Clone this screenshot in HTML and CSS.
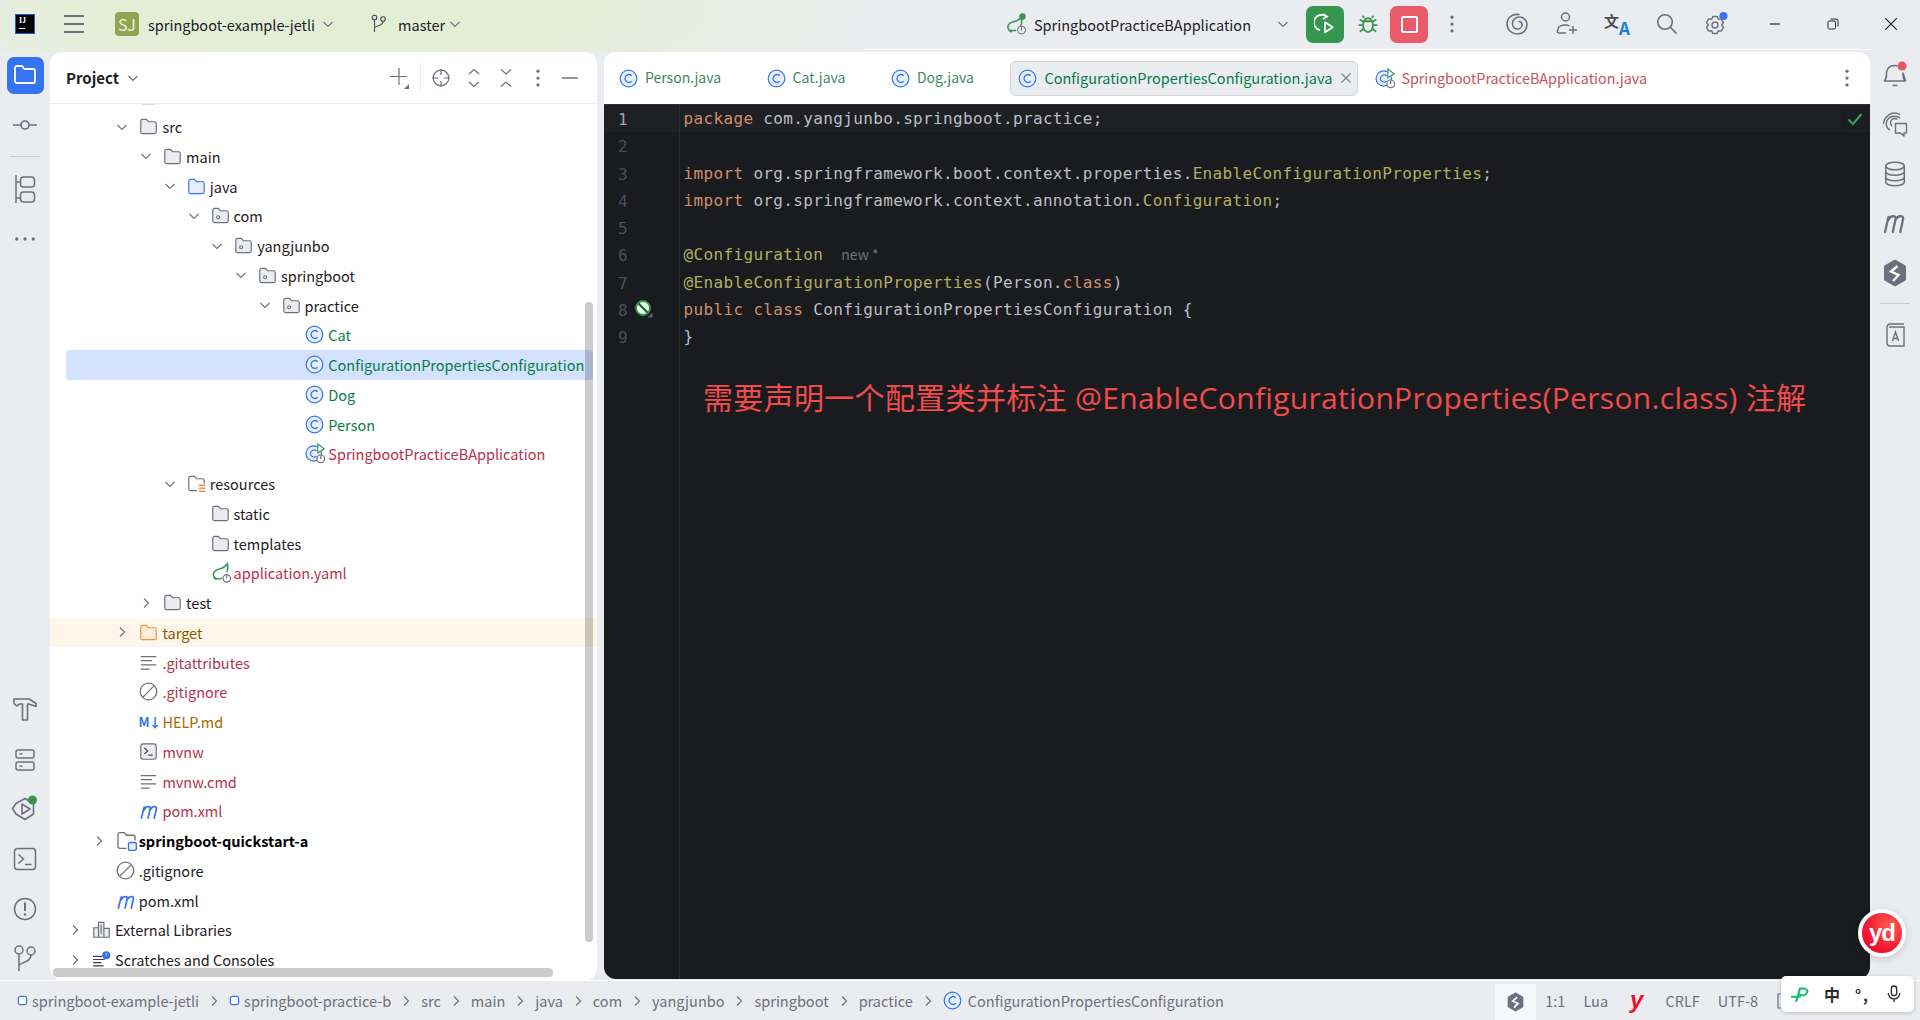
FILE: index.html
```html
<!DOCTYPE html>
<html lang="zh">
<head>
<meta charset="utf-8">
<title>springboot-example-jetli</title>
<link rel="stylesheet" href="styles.css">
</head>
<body>
<svg class="sprite" width="0" height="0" aria-hidden="true">
  <defs>
    <symbol id="folder" viewBox="0 0 16 16"><path d="M1.500 3.500A1.500 1.500 0 0 1 3 2h3.200l1.800 2h5A1.500 1.500 0 0 1 14.500 5.500v7A1.500 1.500 0 0 1 13 14H3a1.500 1.500 0 0 1-1.500-1.500z" fill="#ebecf0" stroke="#6c707e"/></symbol>
    <symbol id="folder-src" viewBox="0 0 16 16"><path d="M1.500 3.500A1.500 1.500 0 0 1 3 2h3.200l1.800 2h5A1.500 1.500 0 0 1 14.500 5.500v7A1.500 1.500 0 0 1 13 14H3a1.500 1.500 0 0 1-1.500-1.500z" fill="#e7effd" stroke="#3574f0"/></symbol>
    <symbol id="folder-out" viewBox="0 0 16 16"><path d="M1.500 3.500A1.500 1.500 0 0 1 3 2h3.200l1.800 2h5A1.500 1.500 0 0 1 14.500 5.500v7A1.500 1.500 0 0 1 13 14H3a1.500 1.500 0 0 1-1.500-1.500z" fill="#ffeedd" stroke="#ec8f4c"/></symbol>
    <symbol id="package" viewBox="0 0 16 16"><path d="M1.500 3.500A1.500 1.500 0 0 1 3 2h3.200l1.800 2h5A1.500 1.500 0 0 1 14.500 5.500v7A1.500 1.500 0 0 1 13 14H3a1.500 1.500 0 0 1-1.500-1.500z" fill="#ebecf0" stroke="#6c707e"/><circle cx="6" cy="9.500" r="1.300" fill="none" stroke="#6c707e" stroke-width=".9"/></symbol>
    <symbol id="folder-res" viewBox="0 0 16 16"><path d="M8.500 14H3a1.500 1.500 0 0 1-1.500-1.500v-9A1.500 1.500 0 0 1 3 2h3.200l1.800 2h5A1.500 1.500 0 0 1 14.500 5.500V8" fill="#fff" stroke="#6c707e"/><path d="M10 9.500h5.500M10 12h5.500M10 14.500h5.500" fill="none" stroke="#ec8f4c" stroke-width="1.400"/></symbol>
    <symbol id="module" viewBox="0 0 16 16"><path d="M8 14H3a1.500 1.500 0 0 1-1.500-1.500v-9A1.500 1.500 0 0 1 3 2h3.200l1.800 2h5A1.500 1.500 0 0 1 14.500 5.500V8" fill="#fff" stroke="#6c707e"/><rect x="9.500" y="9.500" width="6" height="6" rx="1.500" fill="#e7effd" stroke="#3574f0"/></symbol>
    <symbol id="cls" viewBox="0 0 16 16"><circle cx="8" cy="8" r="7" fill="#e7effd" stroke="#3574f0"/><path d="M10.700 5.600A3.400 3.400 0 0 0 5 8a3.400 3.400 0 0 0 5.700 2.400" fill="none" stroke="#3574f0" stroke-width="1.100"/></symbol>
    <symbol id="spring-cls" viewBox="0 0 18 18"><circle cx="7.500" cy="9" r="6.600" fill="#e7effd" stroke="#3574f0"/><path d="M10 6.800A3.200 3.200 0 0 0 4.600 9 3.200 3.200 0 0 0 10 11.200" fill="none" stroke="#3574f0"/><path d="M11 .8l5.500 4.200L11 8.400z" fill="#fff" stroke="#369650"/><circle cx="13.500" cy="13.600" r="3.300" fill="#fff" stroke="#6c707e"/><path d="M13.500 10.800v3" stroke="#6c707e"/></symbol>
    <symbol id="spring" viewBox="0 0 18 18"><path d="M4.500 14.800C1.500 12.500 1 9.500 4 7.300 7 5 11 6.500 14 1.500c.7 3 .4 5.500-.6 7.200" fill="none" stroke="#369650" stroke-width="1.300"/><path d="M2.500 13.500c2 1.300 5 1.200 7 .3" fill="none" stroke="#369650" stroke-width="1.300"/><circle cx="13.500" cy="14" r="3.200" fill="#fff" stroke="#6c707e"/><path d="M13.500 11v3" stroke="#6c707e"/></symbol>
    <symbol id="spring-run" viewBox="0 0 22 22"><path d="M6 19C1.500 17.500 .8 13 3.500 10.500 7 7.500 12 9.500 15 4.500c1 3 1 6-.6 8.500" fill="none" stroke="#369650" stroke-width="1.500"/><path d="M3 17.500h7" stroke="#369650" stroke-width="1.500"/><circle cx="16.500" cy="3.500" r="3.200" fill="#369650"/><circle cx="15.500" cy="17" r="4" fill="#ebecf0" stroke="#6c707e"/><path d="M15.500 13.500v4" stroke="#6c707e"/></symbol>
    <symbol id="text" viewBox="0 0 16 16"><path d="M1.500 3h13M1.500 6.500h9.500M1.500 10h13M1.500 13.500h7.500" fill="none" stroke="#6c707e" stroke-width="1.100"/></symbol>
    <symbol id="ignore" viewBox="0 0 16 16"><circle cx="8" cy="8" r="7" fill="#fff" stroke="#6c707e" stroke-width="1.100"/><path d="M3.500 12.500l9-9" stroke="#6c707e" stroke-width="1.100"/></symbol>
    <symbol id="shell" viewBox="0 0 16 16"><rect x="1.500" y="1.500" width="13" height="13" rx="2" fill="#ebecf0" stroke="#6c707e"/><path d="M4.500 5l2.800 2.500L4.500 10M8 11h3.500" fill="none" stroke="#3d4048"/></symbol>
    <symbol id="mvn" viewBox="0 0 18 18"><path d="M2 15.500L4.500 6M4.400 8.500C5.500 5.500 9.500 4.500 9.700 7L7.800 15.500M9.600 8.500c1.100-3 5.200-4 5.400-1.500L13.100 15.500" fill="none" stroke="#3574f0" stroke-width="1.500" stroke-linecap="round"/></symbol>
    <symbol id="libs" viewBox="0 0 16 16"><path d="M1.500 6.500h4v8h-4zM5.500 2h4.500v12.500H5.500zM10 7h4.500v7.500H10z" fill="#ebecf0" stroke="#6c707e"/><path d="M7.700 4v8" stroke="#6c707e"/></symbol>
    <symbol id="scratch" viewBox="0 0 18 16"><path d="M1 5h9M1 8h11M1 11h8M1 14h10" fill="none" stroke="#3d4048" stroke-width="1.100"/><circle cx="13.500" cy="4" r="3.800" fill="#3574f0"/><path d="M13.500 2v2.300" stroke="#fff"/></symbol>
    <symbol id="chev-d" viewBox="0 0 12 12"><path d="M1.500 4l4.500 4.500L10.500 4" fill="none" stroke="#6c707e" stroke-width="1.100"/></symbol>
    <symbol id="chev-r" viewBox="0 0 12 12"><path d="M4 1.500L8.500 6 4 10.500" fill="none" stroke="#6c707e" stroke-width="1.100"/></symbol>
    <symbol id="kebab" viewBox="0 0 16 16"><circle cx="8" cy="2.500" r="1.300" fill="#6c707e"/><circle cx="8" cy="8" r="1.300" fill="#6c707e"/><circle cx="8" cy="13.500" r="1.300" fill="#6c707e"/></symbol>
    <symbol id="branch" viewBox="0 0 16 20"><circle cx="3.500" cy="3.500" r="2.300" fill="none" stroke="#4a4d55" stroke-width="1.100"/><circle cx="12" cy="5" r="2.300" fill="none" stroke="#4a4d55" stroke-width="1.100"/><path d="M3.500 6v12M3.500 14c0-2.500 8.500-1.500 8.500-6.800" fill="none" stroke="#4a4d55" stroke-width="1.100"/></symbol>
    <symbol id="rerun" viewBox="0 0 20 20"><path d="M11 3A7 7 0 1 0 5.500 15.500" fill="none" stroke="#fff" stroke-width="1.700"/><path d="M8 .8l4 2.400-4 2.400" fill="none" stroke="#fff" stroke-width="1.500"/><path d="M10 8.500l7 4.500-7 4.500z" fill="none" stroke="#fff" stroke-width="1.600" stroke-linejoin="round"/></symbol>
    <symbol id="bug" viewBox="0 0 20 20"><ellipse cx="10" cy="11" rx="4.600" ry="6.300" fill="none" stroke="#369650" stroke-width="1.600"/><path d="M6 7.500h8M6.500 4.500L5 2.500M13.500 4.500l1.500-2M5.500 11H1.500M14.500 11h4M6 14.500l-3.500 2.500M14 14.500l3.500 2.500M6 8L2.500 6M14 8l3.500-2" fill="none" stroke="#369650" stroke-width="1.600"/></symbol>
    <symbol id="swirl" viewBox="0 0 22 22"><path d="M13 1.500C6 .5 1 5 1 11c0 6 5 10 10.500 10C17 21 21 17 21 11.500 21 7 17.500 4 13.500 4 9.500 4 6.500 7 6.500 10.500c0 3.500 2.500 5.500 5 5.500s4.500-2 4.500-4.300c0-2-1.500-3.200-3-3.200" fill="none" stroke="#6c707e" stroke-width="1.600" stroke-linecap="round"/></symbol>
    <symbol id="adduser" viewBox="0 0 22 24"><circle cx="9.500" cy="5" r="4" fill="none" stroke="#6c707e" stroke-width="1.500"/><path d="M1.500 21c0-3.500 0-8 8-8 2 0 3 .3 4 1M2 21h8M17 14v8M13 18h8" fill="none" stroke="#6c707e" stroke-width="1.500"/></symbol>
    <symbol id="search" viewBox="0 0 22 22"><circle cx="9" cy="9" r="7.300" fill="none" stroke="#6c707e" stroke-width="1.600"/><path d="M14.300 14.300l6.300 6.300" stroke="#6c707e" stroke-width="1.600"/></symbol>
    <symbol id="gear" viewBox="0 0 24 24"><g transform="translate(0 3)"><path d="M7.870 1.460h4.260L13.300 4.280 16.330 3.880 18.460 7.570 16.600 10l1.860 2.430-2.130 3.690-3.030-.4-1.170 2.820H7.870L6.700 15.720l-3.030.4-2.130-3.690L3.400 10 1.540 7.570l2.130-3.690 3.030.4z" fill="none" stroke="#6c707e" stroke-width="1.400" stroke-linejoin="round"/><circle cx="10" cy="10" r="3" fill="none" stroke="#6c707e" stroke-width="1.400"/></g><circle cx="18.500" cy="4" r="4" fill="#3574f0"/></symbol>
    <symbol id="project" viewBox="0 0 24 24"><path d="M2 5a2 2 0 0 1 2-2h5l2.500 3H20a2 2 0 0 1 2 2v10a2 2 0 0 1-2 2H4a2 2 0 0 1-2-2z" fill="none" stroke="#fff" stroke-width="1.800"/></symbol>
    <symbol id="commit" viewBox="0 0 26 26"><circle cx="13" cy="13" r="4" fill="none" stroke="#6c707e" stroke-width="1.600"/><path d="M1 13h8M17 13h8" stroke="#6c707e" stroke-width="1.600"/></symbol>
    <symbol id="structure" viewBox="0 0 24 30"><path d="M3 1v28M3 8h4M3 24h4" fill="none" stroke="#6c707e" stroke-width="1.500"/><rect x="7.500" y="3" width="14" height="10" rx="3" fill="none" stroke="#6c707e" stroke-width="1.500"/><rect x="7.500" y="18" width="14" height="10" rx="3" fill="none" stroke="#6c707e" stroke-width="1.500"/></symbol>
    <symbol id="dots" viewBox="0 0 24 6"><circle cx="3" cy="3" r="1.800" fill="#6c707e"/><circle cx="12" cy="3" r="1.800" fill="#6c707e"/><circle cx="21" cy="3" r="1.800" fill="#6c707e"/></symbol>
    <symbol id="hammer" viewBox="0 0 26 26"><path d="M2 2h15l7 4.500v3L17 7h-1.500v16h-5V7H7.500L4.500 9 2 6.500z" fill="none" stroke="#6c707e" stroke-width="1.600" stroke-linejoin="round"/></symbol>
    <symbol id="services" viewBox="0 0 24 26"><rect x="3" y="3" width="18" height="8" rx="2" fill="none" stroke="#6c707e" stroke-width="1.500"/><rect x="3" y="15" width="18" height="8" rx="2" fill="none" stroke="#6c707e" stroke-width="1.500"/><path d="M6.500 7h3M6.500 19h3" stroke="#6c707e" stroke-width="1.500"/></symbol>
    <symbol id="run-tool" viewBox="0 0 28 28"><path d="M14 3.500L22.500 8.500V19L14 24.500 5 19 1.500 13.500 5 8.500z" fill="none" stroke="#6c707e" stroke-width="1.600" stroke-linejoin="round"/><path d="M11 9l8 5-8 5z" fill="none" stroke="#6c707e" stroke-width="1.600" stroke-linejoin="round"/><circle cx="21.500" cy="5" r="4.500" fill="#369650"/></symbol>
    <symbol id="terminal" viewBox="0 0 24 24"><rect x="1.500" y="1.500" width="21" height="21" rx="3" fill="none" stroke="#6c707e" stroke-width="1.500"/><path d="M5.500 7.500l5 4.500-5 4.500M12 17.500h6.500" fill="none" stroke="#6c707e" stroke-width="1.500"/></symbol>
    <symbol id="problems" viewBox="0 0 24 24"><circle cx="12" cy="12" r="10.500" fill="none" stroke="#6c707e" stroke-width="1.500"/><path d="M12 5.500v8.500" stroke="#6c707e" stroke-width="2"/><circle cx="12" cy="17.500" r="1.300" fill="#6c707e"/></symbol>
    <symbol id="vcs" viewBox="0 0 24 28"><circle cx="6" cy="6" r="4" fill="none" stroke="#6c707e" stroke-width="1.500"/><circle cx="18" cy="7" r="4" fill="none" stroke="#6c707e" stroke-width="1.500"/><path d="M6 10v17M6 22c0-4 12-3 12-11" fill="none" stroke="#6c707e" stroke-width="1.500"/></symbol>
    <symbol id="bell" viewBox="0 0 26 28"><path d="M2 20c2.500-2 2.500-4 2.500-8 0-5 4-7.500 8-7.500 1 0 2 .2 3 .5M21 12c0 4 0 6 2.500 8zM2 20h21.500M10.500 24.500h5" fill="none" stroke="#6c707e" stroke-width="1.500" stroke-linejoin="round"/><circle cx="20" cy="5" r="4.500" fill="#e55765"/></symbol>
    <symbol id="aichat" viewBox="0 0 26 26"><path d="M1.500 13C2 6.500 9-1 18 3.500M8 19C4 17 3 12 6 8c3-3.500 9-3.500 12-1M10 15c-2-2-2-5 0-6.500 1.500-1 4-1 5.500 0" fill="none" stroke="#6c707e" stroke-width="1.400"/><path d="M13.500 12.500h11v9.500H22v3l-3.500-3h-5z" fill="#ebecf0" stroke="#6c707e" stroke-width="1.400" stroke-linejoin="round"/></symbol>
    <symbol id="database" viewBox="0 0 22 26"><ellipse cx="11" cy="5" rx="9.300" ry="3.800" fill="none" stroke="#6c707e" stroke-width="1.500"/><path d="M1.700 5v16c0 2.200 4.200 3.800 9.300 3.800s9.300-1.600 9.300-3.800V5M1.700 10.500c0 2.200 4.200 3.800 9.300 3.800s9.300-1.600 9.300-3.800M1.700 16c0 2.200 4.200 3.800 9.300 3.800s9.300-1.600 9.300-3.800" fill="none" stroke="#6c707e" stroke-width="1.500"/></symbol>
    <symbol id="m-gray" viewBox="0 0 24 22"><path d="M2 20L5.500 5M5.300 8C7 3.500 12 3 12.700 6.500L9.800 20M12.500 8c1.700-4.500 7-5 7.700-1.500L17.300 20" fill="none" stroke="#6c707e" stroke-width="2.300" stroke-linecap="round"/></symbol>
    <symbol id="hex" viewBox="0 0 24 28"><path d="M12 1l10.500 6v14L12 27 1.500 21V7z" fill="#6c707e" stroke="#6c707e" stroke-linejoin="round"/><path d="M14.500 7L8 12.500l7.500 3.500L10 22" fill="none" stroke="#fff" stroke-width="2.400"/></symbol>
    <symbol id="book" viewBox="0 0 22 26"><path d="M3 21V5.500C3 3.500 4.500 2 6.500 2H20M5 5h15v19H6c-2 0-3-1.300-3-3" fill="none" stroke="#6c707e" stroke-width="1.400"/><path d="M8.500 19l3-9 3 9M9.500 16.500h4" fill="none" stroke="#6c707e" stroke-width="1.400"/></symbol>
    <symbol id="locate" viewBox="0 0 20 20"><circle cx="10" cy="10" r="7.800" fill="none" stroke="#6c707e" stroke-width="1.200"/><path d="M10 1v6M10 13v6M1 10h6M13 10h6" stroke="#6c707e" stroke-width="1.200"/></symbol>
    <symbol id="expand" viewBox="0 0 14 20"><path d="M2 6l5-4.500L12 6M2 14l5 4.500 5-4.500" fill="none" stroke="#6c707e" stroke-width="1.200"/></symbol>
    <symbol id="collapse" viewBox="0 0 14 20"><path d="M2 1.500L7 6l5-4.500M2 18.500L7 14l5 4.500" fill="none" stroke="#6c707e" stroke-width="1.200"/></symbol>
    <symbol id="plus" viewBox="0 0 20 24"><path d="M9 2v17M0 10.500h17" stroke="#6c707e" stroke-width="1.200"/><path d="M19 18v5h-5z" fill="#6c707e"/></symbol>
    <symbol id="minus" viewBox="0 0 16 4"><path d="M0 2h16" stroke="#6c707e" stroke-width="1.300"/></symbol>
    <symbol id="close" viewBox="0 0 12 12"><path d="M1.500 1.500l9 9M10.500 1.500l-9 9" stroke="#81848d" stroke-width="1.100"/></symbol>
    <symbol id="win-min" viewBox="0 0 12 12"><path d="M1 6h10" stroke="#1f2024" stroke-width="1.200"/></symbol>
    <symbol id="win-max" viewBox="0 0 12 12"><rect x="1" y="3" width="7.500" height="8" rx="1.500" fill="none" stroke="#1f2024" stroke-width="1"/><path d="M3.500 1h5.500a2 2 0 0 1 2 2v5.500" fill="none" stroke="#1f2024" stroke-width="1"/></symbol>
    <symbol id="win-close" viewBox="0 0 12 12"><path d="M1 1l10 10M11 1L1 11" stroke="#1f2024" stroke-width="1"/></symbol>
    <symbol id="nav-mod" viewBox="0 0 12 12"><rect x="1.500" y="1.500" width="9" height="9" rx="2" fill="#fff" stroke="#3574f0" stroke-width="1.300"/></symbol>
    <symbol id="run-marker" viewBox="0 0 18 18"><circle cx="8" cy="8" r="7" fill="#eafbe9" stroke="#369650" stroke-width="1.800"/><path d="M3.500 3.500l9 9" stroke="#1f5d30" stroke-width="2.200"/><path d="M17.500 12.500v5h-5z" fill="#5a5d66"/></symbol>
    <symbol id="check" viewBox="0 0 16 14"><path d="M1.500 7.500L6 12 14.500 2" fill="none" stroke="#499c54" stroke-width="2"/></symbol>
    <symbol id="mic" viewBox="0 0 18 20"><rect x="6" y="1" width="6" height="11" rx="3" fill="none" stroke="#2b2d30" stroke-width="1.500"/><path d="M2.500 9a6.500 6.500 0 0 0 13 0M9 16v3" fill="none" stroke="#2b2d30" stroke-width="1.500"/></symbol>
    <symbol id="pin" viewBox="0 0 24 20"><path d="M1 13h11M7 19L12 2h4c5 0 7 3 5 6s-6 4-9 2" fill="none" stroke="#17b978" stroke-width="2.800" stroke-linecap="round"/></symbol>
    <symbol id="bracket" viewBox="0 0 8 16"><path d="M7 1H2v14h5" fill="none" stroke="#6c707e" stroke-width="1.200"/></symbol>
  </defs>
</svg>

<header class="titlebar">
  <div class="ij-logo"><span class="ij-name">IJ</span><span class="ij-bar"></span></div>
  <div class="hamburger"><span></span><span></span><span></span></div>
  <div class="badge">SJ</div>
  <span class="tb-label project-name">springboot-example-jetli</span>
  <svg class="ic12 after-project"><use href="#chev-d"/></svg>
  <svg class="ic-branch"><use href="#branch"/></svg>
  <span class="tb-label">master</span>
  <svg class="ic12 after-branch"><use href="#chev-d"/></svg>
  <div class="tb-right">
    <svg class="ic-springrun"><use href="#spring-run"/></svg>
    <span class="tb-label run-name">SpringbootPracticeBApplication</span>
    <svg class="ic12 run-chev"><use href="#chev-d"/></svg>
    <div class="action run"><svg class="ic22"><use href="#rerun"/></svg></div>
    <div class="slot-bug"><svg class="ic22"><use href="#bug"/></svg></div>
    <div class="action stop"><span class="stop-sq"></span></div>
    <div class="slot-kebab"><svg class="ic20"><use href="#kebab"/></svg></div>
    <div class="slot50"><svg class="ic22"><use href="#swirl"/></svg></div>
    <div class="slot50"><svg class="ic-user"><use href="#adduser"/></svg></div>
    <div class="slot50 translate"><span class="tr-zh">文</span><span class="tr-a">A</span></div>
    <div class="slot50"><svg class="ic22"><use href="#search"/></svg></div>
    <div class="slot50"><svg class="ic-gear"><use href="#gear"/></svg></div>
    <div class="winbtn first"><svg class="ic12"><use href="#win-min"/></svg></div>
    <div class="winbtn"><svg class="ic12"><use href="#win-max"/></svg></div>
    <div class="winbtn"><svg class="ic14"><use href="#win-close"/></svg></div>
  </div>
  <span class="tb-line"></span>
</header>

<main class="workspace">
  <nav class="stripe left">
    <div class="stripe-group">
      <div class="stripe-slot"><div class="project-btn"><svg class="ic24"><use href="#project"/></svg></div></div>
      <div class="stripe-slot"><svg class="ic26"><use href="#commit"/></svg></div>
      <div class="stripe-sep"></div>
      <div class="stripe-slot"><svg class="ic-struct"><use href="#structure"/></svg></div>
      <div class="stripe-slot"><svg class="ic-dots"><use href="#dots"/></svg></div>
    </div>
    <div class="stripe-group bottom">
      <div class="stripe-slot"><svg class="ic26"><use href="#hammer"/></svg></div>
      <div class="stripe-slot"><svg class="ic26"><use href="#services"/></svg></div>
      <div class="stripe-slot"><svg class="ic28"><use href="#run-tool"/></svg></div>
      <div class="stripe-slot"><svg class="ic24"><use href="#terminal"/></svg></div>
      <div class="stripe-slot"><svg class="ic24"><use href="#problems"/></svg></div>
      <div class="stripe-slot"><svg class="ic-vcs"><use href="#vcs"/></svg></div>
    </div>
  </nav>

  <section class="project-panel">
    <div class="panel-head">
      <strong class="panel-title">Project</strong>
      <svg class="ic12 title-chev"><use href="#chev-d"/></svg>
      <div class="head-tools">
        <svg class="ic-plus"><use href="#plus"/></svg>
        <span class="head-sep"></span>
        <svg class="ic20"><use href="#locate"/></svg>
        <svg class="ic-exp"><use href="#expand"/></svg>
        <svg class="ic-exp"><use href="#collapse"/></svg>
        <svg class="ic20"><use href="#kebab"/></svg>
        <svg class="ic-min"><use href="#minus"/></svg>
      </div>
    </div>
    <div class="tree">
      <div class="row first" style="--d:2"><span class="tw"></span><svg class="ti"><use href="#folder"/></svg></div>
      <div class="row" style="--d:2"><svg class="tw"><use href="#chev-d"/></svg><svg class="ti"><use href="#folder"/></svg><span>src</span></div>
      <div class="row" style="--d:3"><svg class="tw"><use href="#chev-d"/></svg><svg class="ti"><use href="#folder"/></svg><span>main</span></div>
      <div class="row" style="--d:4"><svg class="tw"><use href="#chev-d"/></svg><svg class="ti"><use href="#folder-src"/></svg><span>java</span></div>
      <div class="row" style="--d:5"><svg class="tw"><use href="#chev-d"/></svg><svg class="ti"><use href="#package"/></svg><span>com</span></div>
      <div class="row" style="--d:6"><svg class="tw"><use href="#chev-d"/></svg><svg class="ti"><use href="#package"/></svg><span>yangjunbo</span></div>
      <div class="row" style="--d:7"><svg class="tw"><use href="#chev-d"/></svg><svg class="ti"><use href="#package"/></svg><span>springboot</span></div>
      <div class="row" style="--d:8"><svg class="tw"><use href="#chev-d"/></svg><svg class="ti"><use href="#package"/></svg><span>practice</span></div>
      <div class="row green" style="--d:9"><span class="tw"></span><svg class="ti"><use href="#cls"/></svg><span>Cat</span></div>
      <div class="row green sel" style="--d:9"><span class="tw"></span><svg class="ti"><use href="#cls"/></svg><span>ConfigurationPropertiesConfiguration</span></div>
      <div class="row green" style="--d:9"><span class="tw"></span><svg class="ti"><use href="#cls"/></svg><span>Dog</span></div>
      <div class="row green" style="--d:9"><span class="tw"></span><svg class="ti"><use href="#cls"/></svg><span>Person</span></div>
      <div class="row red" style="--d:9"><span class="tw"></span><svg class="ti wide"><use href="#spring-cls"/></svg><span>SpringbootPracticeBApplication</span></div>
      <div class="row" style="--d:4"><svg class="tw"><use href="#chev-d"/></svg><svg class="ti"><use href="#folder-res"/></svg><span>resources</span></div>
      <div class="row" style="--d:5"><span class="tw"></span><svg class="ti"><use href="#folder"/></svg><span>static</span></div>
      <div class="row" style="--d:5"><span class="tw"></span><svg class="ti"><use href="#folder"/></svg><span>templates</span></div>
      <div class="row red" style="--d:5"><span class="tw"></span><svg class="ti wide"><use href="#spring"/></svg><span>application.yaml</span></div>
      <div class="row" style="--d:3"><svg class="tw"><use href="#chev-r"/></svg><svg class="ti"><use href="#folder"/></svg><span>test</span></div>
      <div class="row excluded" style="--d:2"><svg class="tw"><use href="#chev-r"/></svg><svg class="ti"><use href="#folder-out"/></svg><span>target</span></div>
      <div class="row red" style="--d:2"><span class="tw"></span><svg class="ti"><use href="#text"/></svg><span>.gitattributes</span></div>
      <div class="row red" style="--d:2"><span class="tw"></span><svg class="ti"><use href="#ignore"/></svg><span>.gitignore</span></div>
      <div class="row amber" style="--d:2"><span class="tw"></span><span class="ti md">M↓</span><span>HELP.md</span></div>
      <div class="row red" style="--d:2"><span class="tw"></span><svg class="ti"><use href="#shell"/></svg><span>mvnw</span></div>
      <div class="row red" style="--d:2"><span class="tw"></span><svg class="ti"><use href="#text"/></svg><span>mvnw.cmd</span></div>
      <div class="row red" style="--d:2"><span class="tw"></span><svg class="ti wide"><use href="#mvn"/></svg><span>pom.xml</span></div>
      <div class="row bold" style="--d:1"><svg class="tw"><use href="#chev-r"/></svg><svg class="ti wide"><use href="#module"/></svg><span>springboot-quickstart-a</span></div>
      <div class="row" style="--d:1"><span class="tw"></span><svg class="ti"><use href="#ignore"/></svg><span>.gitignore</span></div>
      <div class="row" style="--d:1"><span class="tw"></span><svg class="ti wide"><use href="#mvn"/></svg><span>pom.xml</span></div>
      <div class="row" style="--d:0"><svg class="tw"><use href="#chev-r"/></svg><svg class="ti"><use href="#libs"/></svg><span>External Libraries</span></div>
      <div class="row" style="--d:0"><svg class="tw"><use href="#chev-r"/></svg><svg class="ti"><use href="#scratch"/></svg><span>Scratches and Consoles</span></div>
    </div>
    <span class="scroll-v"></span>
    <span class="scroll-h"></span>
  </section>

  <section class="editor-panel">
    <div class="tabs">
      <div class="tab green-tab"><svg class="ti"><use href="#cls"/></svg><span>Person.java</span></div>
      <div class="tab green-tab"><svg class="ti"><use href="#cls"/></svg><span>Cat.java</span></div>
      <div class="tab green-tab"><svg class="ti"><use href="#cls"/></svg><span>Dog.java</span></div>
      <div class="tab active"><svg class="ti"><use href="#cls"/></svg><span>ConfigurationPropertiesConfiguration.java</span><svg class="tab-x"><use href="#close"/></svg></div>
      <div class="tab red-tab"><svg class="ti wide"><use href="#spring-cls"/></svg><span>SpringbootPracticeBApplication.java</span></div>
      <svg class="ic20 tabs-menu"><use href="#kebab"/></svg>
    </div>
    <div class="code-area">
      <div class="gutter">
        <div class="ln cur">1</div>
        <div class="ln">2</div>
        <div class="ln">3</div>
        <div class="ln">4</div>
        <div class="ln">5</div>
        <div class="ln">6</div>
        <div class="ln">7</div>
        <div class="ln">8<svg class="marker"><use href="#run-marker"/></svg></div>
        <div class="ln">9</div>
      </div>
      <div class="code">
        <div class="cl cur"><span class="kw">package</span> com.yangjunbo.springboot.practice;</div>
        <div class="cl"></div>
        <div class="cl"><span class="kw">import</span> org.springframework.boot.context.properties.<span class="an">EnableConfigurationProperties</span>;</div>
        <div class="cl"><span class="kw">import</span> org.springframework.context.annotation.<span class="an">Configuration</span>;</div>
        <div class="cl"></div>
        <div class="cl"><span class="an">@Configuration</span><span class="hint">new *</span></div>
        <div class="cl"><span class="an">@EnableConfigurationProperties</span>(Person.<span class="kw">class</span>)</div>
        <div class="cl"><span class="kw">public class</span> ConfigurationPropertiesConfiguration {</div>
        <div class="cl">}</div>
        <p class="note">需要声明一个配置类并标注 @EnableConfigurationProperties(Person.class) 注解</p>
        <div class="inspect"><svg class="ic-check"><use href="#check"/></svg></div>
      </div>
    </div>
  </section>

  <nav class="stripe right">
    <div class="stripe-slot"><svg class="ic-bell"><use href="#bell"/></svg></div>
    <div class="stripe-slot"><svg class="ic26"><use href="#aichat"/></svg></div>
    <div class="stripe-slot"><svg class="ic-db"><use href="#database"/></svg></div>
    <div class="stripe-slot"><svg class="ic-m"><use href="#m-gray"/></svg></div>
    <div class="stripe-slot"><svg class="ic-hex"><use href="#hex"/></svg></div>
    <div class="stripe-sep narrow"></div>
    <div class="stripe-slot book-slot"><svg class="ic-db"><use href="#book"/></svg></div>
  </nav>
</main>

<footer class="statusbar">
  <div class="crumbs">
    <svg class="ic12"><use href="#nav-mod"/></svg><span>springboot-example-jetli</span><svg class="ic-sep"><use href="#chev-r"/></svg>
    <svg class="ic12"><use href="#nav-mod"/></svg><span>springboot-practice-b</span><svg class="ic-sep"><use href="#chev-r"/></svg>
    <span>src</span><svg class="ic-sep"><use href="#chev-r"/></svg>
    <span>main</span><svg class="ic-sep"><use href="#chev-r"/></svg>
    <span>java</span><svg class="ic-sep"><use href="#chev-r"/></svg>
    <span>com</span><svg class="ic-sep"><use href="#chev-r"/></svg>
    <span>yangjunbo</span><svg class="ic-sep"><use href="#chev-r"/></svg>
    <span>springboot</span><svg class="ic-sep"><use href="#chev-r"/></svg>
    <span>practice</span><svg class="ic-sep"><use href="#chev-r"/></svg>
    <svg class="ti"><use href="#cls"/></svg><span>ConfigurationPropertiesConfiguration</span>
  </div>
  <div class="status-right">
    <div class="plugin-box"><svg class="ic-hex-s"><use href="#hex"/></svg></div>
    <span class="si">1:1</span>
    <span class="si">Lua</span>
    <span class="si y-logo">y</span>
    <span class="si">CRLF</span>
    <span class="si">UTF-8</span>
    <svg class="ic-bracket"><use href="#bracket"/></svg>
  </div>
</footer>

<div class="yd-badge"><span>yd</span></div>
<div class="ime">
  <svg class="ic-pin"><use href="#pin"/></svg>
  <span class="ime-zh">中</span>
  <span class="ime-punct">°,</span>
  <svg class="ic-mic"><use href="#mic"/></svg>
</div>
</body>
</html>
```

FILE: styles.css
```css
* { box-sizing: border-box; }
html, body { margin: 0; height: 100%; }
body {
  width: 1920px;
  height: 1020px;
  overflow: hidden;
  display: flex;
  flex-direction: column;
  position: relative;
  background: #ebecf0;
  color: #1f2024;
  font-family: "Noto Sans CJK SC", "Noto Sans", sans-serif;
  font-size: 14.5px;
}
.sprite { position: absolute; }
svg { flex: none; display: block; overflow: visible; }

.ic12 { width: 12px; height: 12px; }
.ic14 { width: 14px; height: 14px; }
.ic20 { width: 20px; height: 20px; }
.ic22 { width: 22px; height: 22px; }
.ic24 { width: 24px; height: 24px; }
.ic26 { width: 26px; height: 26px; }
.ic28 { width: 28px; height: 28px; }

/* title bar */
.titlebar {
  height: 52px;
  flex: none;
  display: flex;
  align-items: center;
  position: relative;
  padding-left: 15px;
  padding-bottom: 4px;
  background:
    radial-gradient(ellipse 560px 130px at 340px 10px, #e2eed5 0%, #e4eed8 45%, rgba(235,236,240,0) 100%),
    #ebecf0;
}
.ij-logo {
  width: 20px;
  height: 20px;
  background: #000;
  border: 1px solid #1f5fd0;
  display: flex;
  flex-direction: column;
  padding: 0 0 0 3px;
  color: #fff;
}
.ij-name { font: 700 8px/11px "Liberation Serif", serif; }
.ij-bar { width: 6px; height: 1px; background: #fff; margin-top: 2px; }
.hamburger {
  width: 20px;
  margin-left: 29px;
  display: flex;
  flex-direction: column;
  gap: 6px;
}
.hamburger span { height: 2px; background: #6c707e; }
.badge {
  width: 24px;
  height: 24px;
  margin-left: 31px;
  border-radius: 4px;
  background: #8fa650;
  color: #eef3e0;
  font-size: 16px;
  line-height: 24px;
  text-align: center;
}
.tb-label { white-space: nowrap; }
.project-name { margin-left: 9px; }
.after-project { margin-left: 7px; }
.ic-branch { width: 16px; height: 20px; margin-left: 37px; margin-right: 11px; }
.after-branch { margin-left: 4px; }
.tb-right { margin-left: auto; display: flex; align-items: center; }
.ic-springrun { width: 22px; height: 22px; margin-right: 6px; }
.run-chev { margin-left: 26px; margin-right: 16px; }
.action {
  width: 38px;
  height: 37px;
  border-radius: 7px;
  display: flex;
  align-items: center;
  justify-content: center;
}
.run { background: #369650; margin-left: 1px; }
.stop { background: #ea5a68; margin-right: 12px; }
.stop-sq { width: 17px; height: 17px; border: 2px solid #fff; border-radius: 2px; }
.slot-bug { width: 47px; display: flex; justify-content: center; margin-right: -1px; }
.slot-kebab { width: 24px; display: flex; justify-content: center; margin-right: 28px; }
.slot50 { width: 50px; display: flex; justify-content: center; align-items: center; }
.ic-user { width: 22px; height: 24px; }
.ic-gear { width: 24px; height: 24px; }
.translate { font-weight: 700; line-height: 1; }
.tr-zh { font-size: 15px; color: #4a4d55; margin-top: -7px; }
.tr-a { font-size: 17px; color: #1a7fe0; margin-top: 7px; }
.winbtn { width: 58px; display: flex; justify-content: center; }
.winbtn.first { margin-left: 4px; }
.tb-line {
  position: absolute;
  left: 865px;
  width: 1005px;
  top: 49px;
  height: 1px;
  background: #fff;
}

/* workspace */
.workspace { flex: 1; display: flex; min-height: 0; }
.stripe {
  width: 50px;
  flex: none;
  display: flex;
  flex-direction: column;
  align-items: center;
}
.stripe.left { justify-content: space-between; }
.stripe.right { margin-top: -2px; }
.stripe-group { display: flex; flex-direction: column; align-items: center; }
.stripe-group:first-child { margin-top: -2px; }
.stripe-group.bottom { margin-bottom: -3px; }
.stripe-group.bottom .stripe-slot { height: 49.6px; }
.stripe-slot { width: 50px; height: 50px; display: flex; align-items: center; justify-content: center; }
.stripe.right .stripe-slot { height: 49.5px; }
.project-btn {
  width: 37px;
  height: 37px;
  border-radius: 7px;
  background: #3574f0;
  display: flex;
  align-items: center;
  justify-content: center;
}
.stripe-sep { width: 30px; height: 1px; background: #c9ccd6; margin: 6px 0 7px; }
.stripe-sep.narrow { margin: 5px 0 7px; }
.ic-struct { width: 24px; height: 30px; }
.ic-dots { width: 22px; height: 6px; }
.ic-vcs { width: 24px; height: 28px; }
.ic-bell { width: 26px; height: 28px; }
.ic-db { width: 22px; height: 26px; }
.ic-m { width: 24px; height: 22px; }
.ic-hex { width: 24px; height: 28px; }

/* project panel */
.project-panel {
  width: 547px;
  flex: none;
  background: #fff;
  border-radius: 12px;
  position: relative;
  overflow: hidden;
  display: flex;
  flex-direction: column;
}
.panel-head {
  height: 52px;
  flex: none;
  display: flex;
  align-items: center;
  padding-left: 16px;
  border-bottom: 1px solid #ebecf0;
}
.panel-title { font-size: 15px; color: #1f2024; }
.title-chev { margin-left: 8px; }
.head-tools { margin-left: auto; display: flex; align-items: center; padding-right: 19px; }
.ic-plus { width: 20px; height: 24px; }
.head-sep { width: 1px; height: 29px; background: #ebecf0; margin: 0 10px 0 10px; }
.ic-exp { width: 14px; height: 20px; margin-left: 19px; }
.head-tools .ic-exp + .ic-exp { margin-left: 18px; }
.head-tools .ic-exp + .ic-exp + .ic20 { margin-left: 15px; }
.head-tools .ic20 + .ic-exp { margin-left: 16px; }
.ic-min { width: 16px; height: 4px; margin-left: 14px; }
.tree { flex: 1; overflow: hidden; min-height: 0; }
.row {
  --base: 17px;
  height: 29.75px;
  display: flex;
  align-items: center;
  white-space: nowrap;
  padding-left: calc(var(--base) + var(--d) * 23.7px);
}
.row.first { margin-top: -22px; }
.tw { width: 16px; height: 12px; flex: none; padding: 0 2px; }
.ti { width: 19px; height: 19px; margin-left: 9px; margin-right: 4px; flex: none; }
.ti.wide { width: 21px; height: 21px; margin-right: 2px; }
.row.sel {
  margin: 0 4px 0 16px;
  padding-left: calc(var(--base) - 16px + var(--d) * 23.7px);
  background: #d4e2ff;
  border-radius: 4px;
}
.row.excluded { background: #fef6e8; color: #8a5a00; }
.row.green { color: #067d46; }
.row.red { color: #b8314e; }
.row.amber { color: #a86a00; }
.row.bold { font-weight: 700; color: #000; }
.md { color: #3574f0; font-weight: 700; font-size: 13px; line-height: 19px; letter-spacing: -1px; margin-left: 8px; margin-right: 5px; }
.scroll-v {
  position: absolute;
  left: 535px;
  top: 250px;
  width: 8px;
  height: 640px;
  border-radius: 4px;
  background: rgba(0,0,0,.2);
}
.scroll-h {
  position: absolute;
  left: 3px;
  top: 916px;
  width: 500px;
  height: 9px;
  border-radius: 4px;
  background: #cbcbcb;
}

/* editor */
.editor-panel {
  width: 1266px;
  margin-left: 7px;
  flex: none;
  display: flex;
  flex-direction: column;
  border-radius: 12px;
  overflow: hidden;
  height: 927px;
}
.tabs {
  height: 52px;
  flex: none;
  background: #fff;
  display: flex;
  align-items: center;
  padding-left: 6px;
}
.tab {
  height: 35px;
  display: flex;
  align-items: center;
  padding: 0 10px 0 8px;
  margin-right: 25.5px;
  white-space: nowrap;
  border: 1px solid transparent;
  border-radius: 6px;
}
.tab span { margin-top: -2px; }
.tab .ti { margin-left: 0; margin-right: 7px; }
.tab .ti.wide { margin-right: 5px; }
.green-tab { color: #3d8a5e; font-size: 14px; }
.red-tab { color: #c8505f; font-size: 14.3px; }
.tab.active {
  background: #ebecf0;
  border-color: #d3d5db;
  color: #067d46;
  padding: 0 5px 0 7px;
  margin-right: 8px;
}
.tab-x { width: 12px; height: 12px; margin-left: 8px; }
.tabs-menu { margin-left: auto; margin-right: 13px; }
.code-area {
  flex: 1;
  min-height: 0;
  display: flex;
  background: #1a1b1e;
  border-top: 1px solid #2b2d30;
  font-family: "DejaVu Sans Mono", monospace;
  font-size: 16px;
  line-height: 27.25px;
  color: #bcbec4;
}
.gutter {
  width: 76px;
  flex: none;
  border-right: 1px solid #2b2d30;
  color: #4b5059;
}
.ln { height: 27.25px; padding: 2px 0 0 14px; display: flex; align-items: center; font-size: 16px; }
.ln.cur { color: #a1a3ab; background: #1f2024; }
.marker { width: 18px; height: 18px; margin: -2px 0 0 7px; }
.code { flex: 1; position: relative; }
.cl { height: 27.25px; padding-left: 3.5px; white-space: pre; letter-spacing: .35px; }
.cl.cur { background: #1f2024; }
.kw { color: #cf8e6d; }
.an { color: #b3ae60; }
.hint {
  margin-left: 18px;
  font-family: "Noto Sans CJK SC", sans-serif;
  font-size: 14px;
  letter-spacing: 0;
  color: #6f737a;
}
.note {
  position: absolute;
  left: 23px;
  top: 273px;
  margin: 0;
  color: #f14c4c;
  font-family: "Open Sans", "Noto Sans CJK SC", sans-serif;
  font-size: 30px;
  line-height: 40px;
  white-space: nowrap;
  letter-spacing: .32px;
}
.inspect {
  position: absolute;
  right: 2px;
  top: 2px;
  width: 27px;
  height: 23px;
  background: #1c1d20;
  display: flex;
  align-items: center;
  justify-content: center;
}
.ic-check { width: 16px; height: 14px; }

/* status */
.statusbar {
  height: 40px;
  flex: none;
  display: flex;
  align-items: center;
  padding-left: 17px;
  color: #6c707e;
  border-top: 1px solid #fff;
  white-space: nowrap;
}
.crumbs { display: flex; align-items: center; }
.crumbs > .ic12 { width: 11px; height: 11px; margin-right: 4px; }
.ic-sep { width: 12px; height: 12px; margin: 0 9px; }
.crumbs .ti { margin: 0 6px 0 0; width: 19px; height: 19px; }
.status-right { margin-left: auto; display: flex; align-items: center; height: 100%; padding-right: 136px; }
.plugin-box {
  width: 41px;
  height: 36px;
  margin-top: 3px;
  background: #f7f8fa;
  display: flex;
  align-items: center;
  justify-content: center;
}
.ic-hex-s { width: 17px; height: 20px; }
.si { padding: 0 9px; }
.y-logo { color: #f0102e; font: italic 700 24px/1 "Liberation Sans", sans-serif; padding: 0 13px 2px; }
.ic-bracket { width: 8px; height: 16px; margin-left: 9px; }

/* overlays */
.yd-badge {
  position: absolute;
  left: 1858px;
  top: 909px;
  width: 48px;
  height: 48px;
  border-radius: 50%;
  background: radial-gradient(circle at 70% 30%, #ff5a50, #f0102e 70%);
  border: 4px solid #fff;
  box-shadow: 0 2px 8px rgba(0,0,0,.15);
  display: flex;
  align-items: center;
  justify-content: center;
  color: #fff;
  font: 700 24px/1 "Liberation Sans", sans-serif;
  letter-spacing: -1px;
}
.ime {
  position: absolute;
  left: 1781px;
  top: 976px;
  width: 133px;
  height: 36px;
  background: #fff;
  border-radius: 5px;
  box-shadow: 0 1px 4px rgba(0,0,0,.2);
  display: flex;
  align-items: center;
  padding-left: 10px;
  color: #2b2d30;
}
.ic-pin { width: 18px; height: 15px; }
.ime-zh { margin-left: 15px; font-size: 16px; font-weight: 700; }
.ime-punct { margin-left: 15px; font-size: 15px; font-weight: 700; letter-spacing: 2px; }
.ic-mic { width: 16px; height: 18px; margin-left: 16px; }
```
